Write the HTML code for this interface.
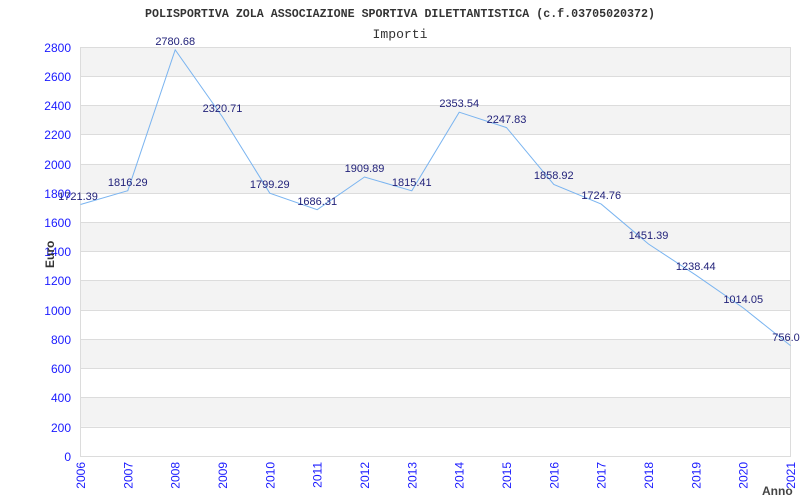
<!DOCTYPE html>
<html><head><meta charset="utf-8"><style>html,body{margin:0;padding:0;background:#fff;width:800px;height:500px;overflow:hidden}</style></head>
<body>
<svg width="800" height="500" xmlns="http://www.w3.org/2000/svg">
<rect width="800" height="500" fill="#fff"/>
<g fill="#f3f3f3">
<rect x="80.5" y="47" width="710" height="29.2"/>
<rect x="80.5" y="105.4" width="710" height="29.2"/>
<rect x="80.5" y="163.9" width="710" height="29.2"/>
<rect x="80.5" y="222.3" width="710" height="29.2"/>
<rect x="80.5" y="280.7" width="710" height="29.2"/>
<rect x="80.5" y="339.1" width="710" height="29.2"/>
<rect x="80.5" y="397.6" width="710" height="29.2"/>
</g>
<g stroke="#dcdcdc" stroke-width="1">
<line x1="80" y1="47.5" x2="791" y2="47.5"/><line x1="80" y1="76.5" x2="791" y2="76.5"/><line x1="80" y1="105.5" x2="791" y2="105.5"/><line x1="80" y1="134.5" x2="791" y2="134.5"/><line x1="80" y1="164.5" x2="791" y2="164.5"/><line x1="80" y1="193.5" x2="791" y2="193.5"/><line x1="80" y1="222.5" x2="791" y2="222.5"/><line x1="80" y1="251.5" x2="791" y2="251.5"/><line x1="80" y1="280.5" x2="791" y2="280.5"/><line x1="80" y1="310.5" x2="791" y2="310.5"/><line x1="80" y1="339.5" x2="791" y2="339.5"/><line x1="80" y1="368.5" x2="791" y2="368.5"/><line x1="80" y1="397.5" x2="791" y2="397.5"/><line x1="80" y1="427.5" x2="791" y2="427.5"/><line x1="80" y1="456.5" x2="791" y2="456.5"/>
<line x1="80.5" y1="47" x2="80.5" y2="457"/><line x1="790.5" y1="47" x2="790.5" y2="457"/>
</g>
<text x="400" y="17" text-anchor="middle" font-family="Liberation Mono, monospace" font-weight="bold" font-size="11.5" fill="#333" textLength="510" lengthAdjust="spacingAndGlyphs">POLISPORTIVA ZOLA ASSOCIAZIONE SPORTIVA DILETTANTISTICA (c.f.03705020372)</text>
<text x="400" y="38" text-anchor="middle" font-family="Liberation Mono, monospace" font-size="13" fill="#333" textLength="55" lengthAdjust="spacingAndGlyphs">Importi</text>
<g font-family="Liberation Sans, Arial, sans-serif" font-size="12" fill="#1a1aff" text-anchor="end">
<text x="71" y="52">2800</text><text x="71" y="81">2600</text><text x="71" y="110">2400</text><text x="71" y="139">2200</text><text x="71" y="169">2000</text><text x="71" y="198">1800</text><text x="71" y="227">1600</text><text x="71" y="256">1400</text><text x="71" y="285">1200</text><text x="71" y="315">1000</text><text x="71" y="344">800</text><text x="71" y="373">600</text><text x="71" y="402">400</text><text x="71" y="432">200</text><text x="71" y="461">0</text>
</g>
<g font-family="Liberation Sans, Arial, sans-serif" font-size="12" fill="#1a1aff" text-anchor="end">
<text transform="translate(85,462) rotate(-90)">2006</text><text transform="translate(132.3,462) rotate(-90)">2007</text><text transform="translate(179.7,462) rotate(-90)">2008</text><text transform="translate(227,462) rotate(-90)">2009</text><text transform="translate(274.3,462) rotate(-90)">2010</text><text transform="translate(321.7,462) rotate(-90)">2011</text><text transform="translate(369,462) rotate(-90)">2012</text><text transform="translate(416.3,462) rotate(-90)">2013</text><text transform="translate(463.7,462) rotate(-90)">2014</text><text transform="translate(511,462) rotate(-90)">2015</text><text transform="translate(558.3,462) rotate(-90)">2016</text><text transform="translate(605.7,462) rotate(-90)">2017</text><text transform="translate(653,462) rotate(-90)">2018</text><text transform="translate(700.3,462) rotate(-90)">2019</text><text transform="translate(747.7,462) rotate(-90)">2020</text><text transform="translate(795,462) rotate(-90)">2021</text>
</g>
<text transform="translate(54,268) rotate(-90)" font-family="Liberation Sans, Arial, sans-serif" font-size="12" font-weight="bold" fill="#333">Euro</text>
<text x="762" y="495" font-family="Liberation Sans, Arial, sans-serif" font-size="12" font-weight="bold" fill="#444">Anno</text>
<polyline fill="none" stroke="#7ab4f0" stroke-width="1" points="80.5,204.5 127.8,190.7 175.2,49.8 222.5,117 269.8,193.2 317.2,209.7 364.5,177 411.8,190.8 459.2,112.2 506.5,127.6 553.8,184.5 601.2,204.1 648.5,244 695.8,275.1 743.2,307.9 790.5,345.6"/>
<g font-family="Liberation Sans, Arial, sans-serif" font-size="11" fill="#22227a" text-anchor="middle">
<text x="78" y="200">1721.39</text><text x="127.8" y="186">1816.29</text><text x="175.2" y="45">2780.68</text><text x="222.5" y="112">2320.71</text><text x="269.8" y="188">1799.29</text><text x="317.2" y="205">1686.31</text><text x="364.5" y="172">1909.89</text><text x="411.8" y="186">1815.41</text><text x="459.2" y="107">2353.54</text><text x="506.5" y="123">2247.83</text><text x="553.8" y="179">1858.92</text><text x="601.2" y="199">1724.76</text><text x="648.5" y="239">1451.39</text><text x="695.8" y="270">1238.44</text><text x="743.2" y="303">1014.05</text><text x="786" y="341">756.0</text>
</g>
</svg>
</body></html>
